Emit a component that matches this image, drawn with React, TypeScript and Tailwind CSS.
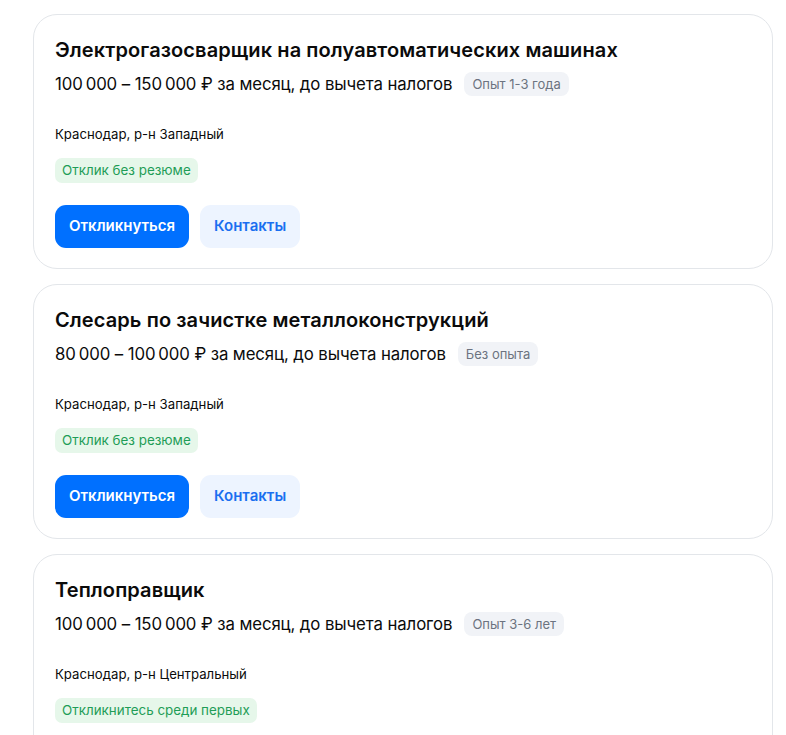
import React from 'react';

type Vacancy = {
  id: number;
  title: string;
  salary: string;
  experience: string;
  location: string;
  tag: string;
};

const vacancies: Vacancy[] = [
  {
    id: 1,
    title: 'Электрогазосварщик на полуавтоматических машинах',
    salary: '100\u2009000 – 150\u2009000 ₽ за месяц, до вычета налогов',
    experience: 'Опыт 1-3 года',
    location: 'Краснодар, р-н Западный',
    tag: 'Отклик без резюме',
  },
  {
    id: 2,
    title: 'Слесарь по зачистке металлоконструкций',
    salary: '80\u2009000 – 100\u2009000 ₽ за месяц, до вычета налогов',
    experience: 'Без опыта',
    location: 'Краснодар, р-н Западный',
    tag: 'Отклик без резюме',
  },
  {
    id: 3,
    title: 'Теплоправщик',
    salary: '100\u2009000 – 150\u2009000 ₽ за месяц, до вычета налогов',
    experience: 'Опыт 3-6 лет',
    location: 'Краснодар, р-н Центральный',
    tag: 'Откликнитесь среди первых',
  },
];

const VacancyCard: React.FC<{ v: Vacancy }> = ({ v }) => (
  <div className="bg-white border border-[#e3e6ea] rounded-[24px] px-[21px] pt-[21px] pb-[20px]">
    <h2 className="text-[20px] leading-[28px] font-semibold text-[#0b0b0b] tracking-[0.1px]">{v.title}</h2>
    <div className="flex items-center gap-[12px] mt-[8px]">
      <span className="text-[16.8px] leading-[24px] text-[#0b0b0b] tracking-[-0.1px]">{v.salary}</span>
      <span className="bg-[#f1f3f7] text-[#6c7380] text-[13px] leading-[24px] px-[8px] rounded-[8px]">{v.experience}</span>
    </div>
    <div className="mt-[28px] text-[13.2px] leading-[20px] text-[#0b0b0b]">{v.location}</div>
    <div className="mt-[13px]">
      <span className="inline-block bg-[#e6f7ea] text-[#1f9d57] text-[13.4px] leading-[25px] px-[7px] rounded-[7px]">{v.tag}</span>
    </div>
    <div className="flex gap-[11px] mt-[22px]">
      <button className="bg-[#0070ff] text-white text-[15px] font-semibold h-[43px] px-[14px] rounded-[11px]">Откликнуться</button>
      <button className="bg-[#edf4ff] text-[#1a6ff0] text-[15px] font-semibold h-[43px] px-[14px] rounded-[11px]">Контакты</button>
    </div>
  </div>
);

export default function App() {
  return (
    <div className="bg-white font-['Inter','Liberation_Sans',sans-serif] px-[33px] pt-[14px] overflow-hidden h-[735px]">
      <div className="w-[740px] flex flex-col gap-[15px]">
        {vacancies.map(v => (
          <VacancyCard key={v.id} v={v} />
        ))}
      </div>
    </div>
  );
}
